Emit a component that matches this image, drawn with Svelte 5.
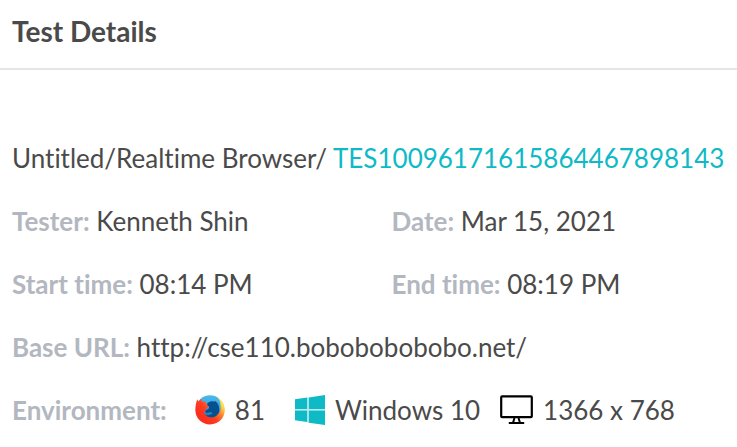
<script>
  const project = 'Untitled';
  const type = 'Realtime Browser';
  const testId = 'TES10096171615864467898143';
  const details = [
    [
      { label: 'Tester', value: 'Kenneth Shin' },
      { label: 'Date', value: 'Mar 15, 2021' },
    ],
    [
      { label: 'Start time', value: '08:14 PM' },
      { label: 'End time', value: '08:19 PM' },
    ],
    [{ label: 'Base URL', value: 'http://cse110.bobobobobobo.net/' }],
  ];
</script>

<section class="panel">
  <header>
    <h1>Test Details</h1>
  </header>
  <div class="body">
    <p class="path">{project}/{type}/ <a href="#test">{testId}</a></p>
    {#each details as row}
      <div class="row">
        {#each row as item}
          <p class="cell"><b>{item.label}:</b> {item.value}</p>
        {/each}
      </div>
    {/each}
    <div class="environment">
      <b>Environment:</b>
      <span class="item browser">
        <svg width="30" height="30" viewBox="0 0 30 30" aria-hidden="true">
          <defs>
            <linearGradient id="tail" x1="0.95" y1="0.15" x2="0.25" y2="0.75">
              <stop offset="0" stop-color="#fff36a" />
              <stop offset="0.2" stop-color="#ffd04a" />
              <stop offset="0.45" stop-color="#ff762b" />
              <stop offset="0.7" stop-color="#ff3d24" />
              <stop offset="1" stop-color="#fb2f1d" />
            </linearGradient>
            <linearGradient id="sky" x1="0" y1="0" x2="0" y2="1">
              <stop offset="0" stop-color="#4bb9ed" />
              <stop offset="0.45" stop-color="#3aa5dd" />
              <stop offset="1" stop-color="#064a87" />
            </linearGradient>
          </defs>
          <circle cx="15" cy="14.5" r="14.2" fill="url(#sky)" />
          <path d="M20.5 1.3C26 3.7 29.8 9 29.8 15c0 8.3-6.5 14.4-14.8 14.4C6.8 29.4.4 23.2.4 15.2.4 11 1 7.3 2.3 4.3l1.2 2.1L6 3.7l.9 3.1c1.5-.4 3-.3 4.4.3-.4 1.5-.1 2.2.8 2.7l2.1.7-.9 2-2.5 1.6.1 2.8-2.1-.6c.4 3.8 3.8 5.4 7.7 4.2 6 1 10-3 9-10 0-5-2-7.2-4.9-9.2z" fill="url(#tail)" />
          <path d="M12.2 8.6c1-1.4 3-2.6 5.2-2.4l2.6.6-.3-1c3.6 2 5 6.4 4.4 10.4-.6 3.3-3.4 6-7.1 6-2.7.1-5.2-.6-6.5-2 3.5.6 5-1.4 7-1.3-.1-1.2-1.5-1.7-3.3-1.5-1.2.1-2.2 1-3.7.2l.1-2 3.1-1.8.5-2.2c-.9-.2-2.2-1.1-2-3z" fill="#07508f" />
        </svg>
        81
      </span>
      <span class="item windows">
        <svg width="30" height="30" viewBox="0 0 30 30" aria-hidden="true">
          <path d="M0 14h30v1.6H0zM12.2 2.6h1.6v25.1h-1.6z" fill="#bdebef" />
          <path d="M0 4.3 12.2 2.6V14H0zM13.8 2.4 30 0v14H13.8zM0 15.6h12.2V27L0 25.3zM13.8 15.6H30V30l-16.2-2.3z" fill="#0ebac5" />
        </svg>
        Windows 10
      </span>
      <span class="item">
        <svg width="33" height="30" viewBox="0 0 33 30" aria-hidden="true">
          <rect x="1.2" y="1.4" width="30.6" height="20.8" rx="1" fill="none" stroke="#000" stroke-width="2.2" />
          <path d="M14.5 23 13 27.8M18.5 23l1.5 4.8M8.8 28h15.4" fill="none" stroke="#000" stroke-width="2" />
        </svg>
        1366 x 768
      </span>
    </div>
  </div>
</section>

<style>
  :global(body) {
    background: #fff;
  }
  .panel {
    color: #4a4a4a;
    font-family: Lato, 'Liberation Sans', sans-serif;
    font-size: 26px;
    font-variant-ligatures: none;
    line-height: 39px;
  }
  header {
    padding: 12px 12px 18px;
    border-bottom: 2px solid #e6e6e6;
  }
  h1 {
    margin: 0;
    font-size: 28px;
    line-height: 38px;
    font-weight: 700;
  }
  .body {
    display: flex;
    flex-direction: column;
    gap: 24px;
    padding: 69px 12px 12px;
  }
  p {
    margin: 0;
  }
  .path {
    white-space: nowrap;
  }
  a {
    color: #0ebac5;
    text-decoration: none;
  }
  b {
    color: #b3b7bf;
    font-weight: 700;
  }
  .row {
    display: flex;
    gap: 46px;
  }
  .cell {
    flex: 1;
  }
  .environment {
    display: flex;
    white-space: nowrap;
  }
  .item {
    display: flex;
    align-items: center;
    gap: 10px;
    margin-left: 20px;
  }
  .browser {
    margin-left: 28px;
  }
  .windows {
    margin-left: 30px;
  }
  svg {
    flex: none;
    margin-bottom: 2px;
  }
</style>
